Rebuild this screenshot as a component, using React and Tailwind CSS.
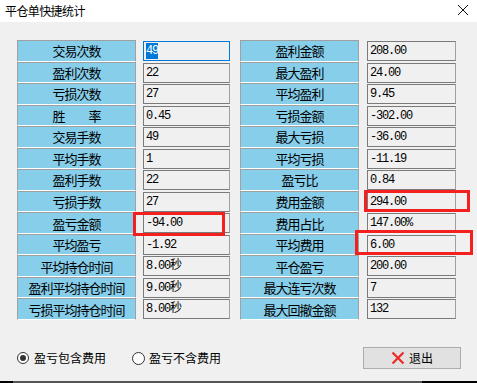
import React from "react";

const left = [
  ["交易次数", "49"],
  ["盈利次数", "22"],
  ["亏损次数", "27"],
  ["胜\u3000\u3000率", "0.45"],
  ["交易手数", "49"],
  ["平均手数", "1"],
  ["盈利手数", "22"],
  ["亏损手数", "27"],
  ["盈亏金额", "-94.00"],
  ["平均盈亏", "-1.92"],
  ["平均持仓时间", "8.00秒"],
  ["盈利平均持仓时间", "9.00秒"],
  ["亏损平均持仓时间", "8.00秒"],
];

const right = [
  ["盈利金额", "208.00"],
  ["最大盈利", "24.00"],
  ["平均盈利", "9.45"],
  ["亏损金额", "-302.00"],
  ["最大亏损", "-36.00"],
  ["平均亏损", "-11.19"],
  ["盈亏比", "0.84"],
  ["费用金额", "294.00"],
  ["费用占比", "147.00%"],
  ["平均费用", "6.00"],
  ["平仓盈亏", "200.00"],
  ["最大连亏次数", "7"],
  ["最大回撤金额", "132"],
];

const cjk = { fontFamily: '"Noto Sans CJK SC", "Noto Sans", sans-serif' };

function Label({ text }) {
  return (
    <div
      className="h-full flex items-center justify-center bg-[#87ceeb] border border-[#a0a0a0] border-b-white text-[13px] tracking-[-1px] text-black whitespace-pre leading-none"
      style={cjk}
    >
      {text}
    </div>
  );
}

function Value({ text, focused }) {
  return (
    <div
      className={
        "mt-[1px] h-[20px] flex items-center pl-[2px] bg-[#f0f0f0] border " +
        (focused ? "border-[#0078d7]" : "border-[#7a7a7a] border-r-[#a0a0a0]")
      }
    >
      <span
        className={
          "text-[12px] leading-none tracking-[-1.2px] font-['Liberation_Mono','Noto_Sans_CJK_SC',monospace] " +
          (focused ? "bg-[#0078d7] text-white py-[2px]" : "text-black")
        }
      >
        {text}
      </span>
    </div>
  );
}

export default function App() {
  return (
    <div className="relative w-[477px] h-[383px] bg-[#f0f0f0] overflow-hidden" style={cjk}>
      {/* title bar */}
      <div className="h-[22px] bg-white flex items-center justify-between pl-[5px] pr-[8px]">
        <span className="text-[12px] tracking-[-0.6px] text-black leading-none">平仓单快捷统计</span>
        <svg width="12" height="12" viewBox="0 0 12 12" className="mt-[-2px]">
          <path d="M1 1 L11 11 M11 1 L1 11" stroke="#111" strokeWidth="1" />
        </svg>
      </div>

      {/* grid */}
      <div className="pt-[18px] pl-[17px]">
        <div className="grid grid-cols-[119px_87px_119px_89px] grid-rows-[repeat(13,minmax(0,1fr))] h-[280px] gap-x-0">
          {left.map((l, i) => (
            <React.Fragment key={i}>
              <div className="col-start-1" style={{ gridRow: i + 1 }}>
                <Label text={l[0]} />
              </div>
              <div className="col-start-2 ml-[7px] w-[87px]" style={{ gridRow: i + 1 }}>
                <Value text={l[1]} focused={i === 0} />
              </div>
              <div className="col-start-3 ml-[17px] w-[119px]" style={{ gridRow: i + 1 }}>
                <Label text={right[i][0]} />
              </div>
              <div className="col-start-4 ml-[25px] w-[89px]" style={{ gridRow: i + 1 }}>
                <Value text={right[i][1]} />
              </div>
            </React.Fragment>
          ))}
        </div>
      </div>

      {/* bottom controls */}
      <div className="mt-[27px] h-[22px] flex items-center pl-[17px] pr-[16px]">
        <div className="flex items-center gap-[5px]">
          <span className="w-[12px] h-[12px] rounded-full border border-[#333] bg-white flex items-center justify-center">
            <span className="w-[6px] h-[6px] rounded-full bg-[#333]" />
          </span>
          <span className="text-[12px] leading-none text-black">盈亏包含费用</span>
        </div>
        <div className="flex items-center gap-[4px] ml-[26px]">
          <span className="w-[13px] h-[13px] rounded-full border border-[#333] bg-white" />
          <span className="text-[12px] leading-none text-black">盈亏不含费用</span>
        </div>
        <button className="ml-auto w-[98px] h-[22px] bg-[#e1e1e1] border border-[#adadad] flex items-center justify-center gap-[4px]">
          <svg width="14" height="14" viewBox="0 0 14 14">
            <path d="M1.5 1.5 L12.5 12.5 M12.5 1.5 L1.5 12.5" stroke="#ee2a2a" strokeWidth="2.2" />
          </svg>
          <span className="text-[12px] leading-none text-black">退出</span>
        </button>
      </div>

      {/* bottom edge */}
      <div className="absolute left-0 right-0 bottom-0 h-[2px] bg-[#555] flex">
        <div className="w-[13px] bg-black" />
        <div className="ml-auto w-[55px] bg-black" />
      </div>

      {/* red annotation boxes */}
      <div className="absolute left-[133px] top-[212px] w-[92px] h-[24px] border-[3px] border-[#f42020]" />
      <div className="absolute left-[364px] top-[190px] w-[106px] h-[22px] border-[3px] border-[#f42020]" />
      <div className="absolute left-[355px] top-[230px] w-[118px] h-[25px] border-[3px] border-[#f42020]" />
    </div>
  );
}
